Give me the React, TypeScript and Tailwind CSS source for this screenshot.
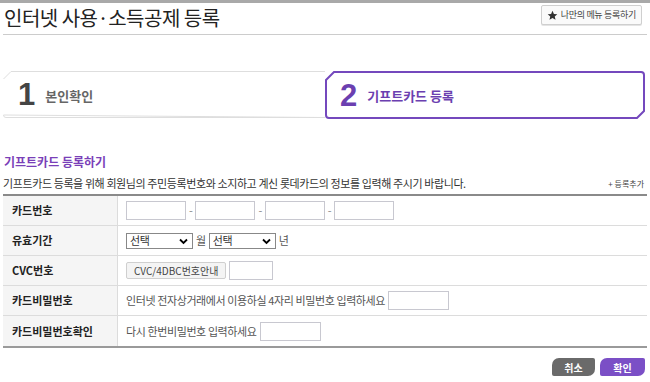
import React from "react";

const font = { fontFamily: '"Noto Sans CJK KR", "Noto Sans", sans-serif' };

function CardInput({ w = "w-[60px]" }: { w?: string }) {
  return <input className={`${w} h-[19px] border border-[#c8c8d0] bg-white outline-none`} />;
}

function Select() {
  return (
    <div className="relative w-[67px] h-[16px] border border-[#888] bg-white flex items-center pl-[3px] text-[11px] text-[#333] leading-none">
      <span className="mt-[-1px]">선택</span>
      <svg className="absolute right-[4px] top-[4px]" width="9" height="7" viewBox="0 0 9 7">
        <path d="M1 1.5 L4.5 5 L8 1.5" stroke="#000" strokeWidth="1.8" fill="none" />
      </svg>
    </div>
  );
}

function Row({ label, children, last }: { label: string; children: React.ReactNode; last?: boolean }) {
  return (
    <div className={`flex h-[30px] ${last ? "" : "border-b border-[#dcdcdc]"}`}>
      <div className="w-[115px] shrink-0 bg-[#f5f5f5] border-r border-[#dcdcdc] flex items-center pl-[9px] text-[11px] font-bold text-[#222]">
        {label}
      </div>
      <div className="flex items-center pl-[8px] text-[11px] text-[#555] gap-[3px] tracking-[-0.4px]">{children}</div>
    </div>
  );
}

export default function App() {
  return (
    <div className="w-[650px] h-[382px] bg-white relative overflow-hidden" style={font}>
      <div className="h-[3px] bg-[#a9a9a9]" />
      <div className="mx-[3px] flex items-start justify-between h-[32px] border-b border-[#cccccc]">
        <div className="text-[20px] leading-[26px] text-[#222] pl-[1px] mt-[2px] tracking-[-0.5px]">인터넷 사용·소득공제 등록</div>
        <div className="mt-[2px] mr-[5px] h-[20px] px-[5px] border border-[#cfcfcf] rounded-[2px] bg-[#fafafa] flex items-center gap-[3px] text-[9px] text-[#444] shadow-[0_1px_0_#e4e4e4]">
          <svg width="11" height="11" viewBox="0 0 24 24">
            <path d="M12 1.5l3.1 7 7.4.6-5.6 4.9 1.7 7.3L12 17.4l-6.6 3.9 1.7-7.3-5.6-4.9 7.4-.6z" fill="#333" />
          </svg>
          <span className="tracking-[-0.3px]">나만의 메뉴 등록하기</span>
        </div>
      </div>

      <div className="mx-[3px] mt-[36px] flex h-[48px]">
        <div className="relative w-[322px] h-[47px]">
          <svg className="absolute inset-0" width="322" height="47" viewBox="0 0 322 47">
            <path d="M0.5 8 L8 0.5 L322 0.5 M322 46.5 L3 46.5 Q0.5 46.5 0.5 44 Z" fill="white" stroke="#dedede" strokeWidth="1" />
          </svg>
          <div className="relative flex items-center h-full pl-[15px] gap-[10px]">
            <span className="text-[31px] font-bold text-[#444] leading-none" style={{ fontFamily: '"Liberation Sans", Arial, sans-serif' }}>1</span>
            <span className="text-[13px] text-[#666] font-semibold mt-[2px]">본인확인</span>
          </div>
        </div>
        <div className="relative w-[320px] h-[48px]">
          <svg className="absolute inset-0" width="320" height="48" viewBox="0 0 320 48">
            <path d="M1 9 L9 1 L316 1 Q319 1 319 4 L319 40 L312 47 L4 47 Q1 47 1 44 Z" fill="white" stroke="#7448bd" strokeWidth="2" />
          </svg>
          <div className="relative flex items-center h-full pl-[15px] gap-[10px]">
            <span className="text-[31px] font-bold text-[#6b3fb0] leading-none" style={{ fontFamily: '"Liberation Sans", Arial, sans-serif' }}>2</span>
            <span className="text-[13px] text-[#6b3fb0] font-bold mt-[2px]">기프트카드 등록</span>
          </div>
        </div>
      </div>

      <div className="mx-[3px] mt-[35px]">
        <div className="text-[12px] font-bold text-[#7a3fb8] pl-[1px] leading-[16px]">기프트카드 등록하기</div>
        <div className="flex justify-between items-center mt-[5px] h-[17px]">
          <span className="text-[11px] text-[#333] tracking-[-0.4px]">기프트카드 등록을 위해 회원님의 주민등록번호와 소지하고 계신 롯데카드의 정보를 입력해 주시기 바랍니다.</span>
          <span className="text-[8px] text-[#444] mr-[3px]">+ 등록추가</span>
        </div>
        <div className="mt-[2px] border-t-2 border-[#8a8a8a] border-b-2 border-b-[#9a9a9a]">
          <Row label="카드번호">
            <CardInput />
            <span className="text-[#888]">-</span>
            <CardInput />
            <span className="text-[#888]">-</span>
            <CardInput />
            <span className="text-[#888]">-</span>
            <CardInput />
          </Row>
          <Row label="유효기간">
            <Select />
            <span>월</span>
            <Select />
            <span>년</span>
          </Row>
          <Row label="CVC번호">
            <div className="h-[17px] px-[7px] border border-[#cfcfcf] rounded-[2px] bg-[#f4f4f4] flex items-center text-[10px] text-[#444] tracking-normal">CVC/4DBC번호안내</div>
            <CardInput w="w-[44px]" />
          </Row>
          <Row label="카드비밀번호">
            <span>인터넷 전자상거래에서 이용하실 4자리 비밀번호 입력하세요</span>
            <CardInput w="w-[61px]" />
          </Row>
          <Row label="카드비밀번호확인" last>
            <span>다시 한번비밀번호 입력하세요</span>
            <CardInput w="w-[61px]" />
          </Row>
        </div>
        <div className="flex justify-end gap-[5px] mt-[10px] mr-[2px]">
          <div className="w-[43px] h-[18px] bg-[#6a6a6a] rounded-tl-[7px] rounded-br-[7px] rounded-tr-[2px] rounded-bl-[2px] flex items-center justify-center text-white text-[10px] font-bold">취소</div>
          <div className="w-[45px] h-[18px] bg-[#7b4fc6] rounded-tl-[7px] rounded-br-[7px] rounded-tr-[2px] rounded-bl-[2px] flex items-center justify-center text-white text-[10px] font-bold">확인</div>
        </div>
      </div>
    </div>
  );
}
